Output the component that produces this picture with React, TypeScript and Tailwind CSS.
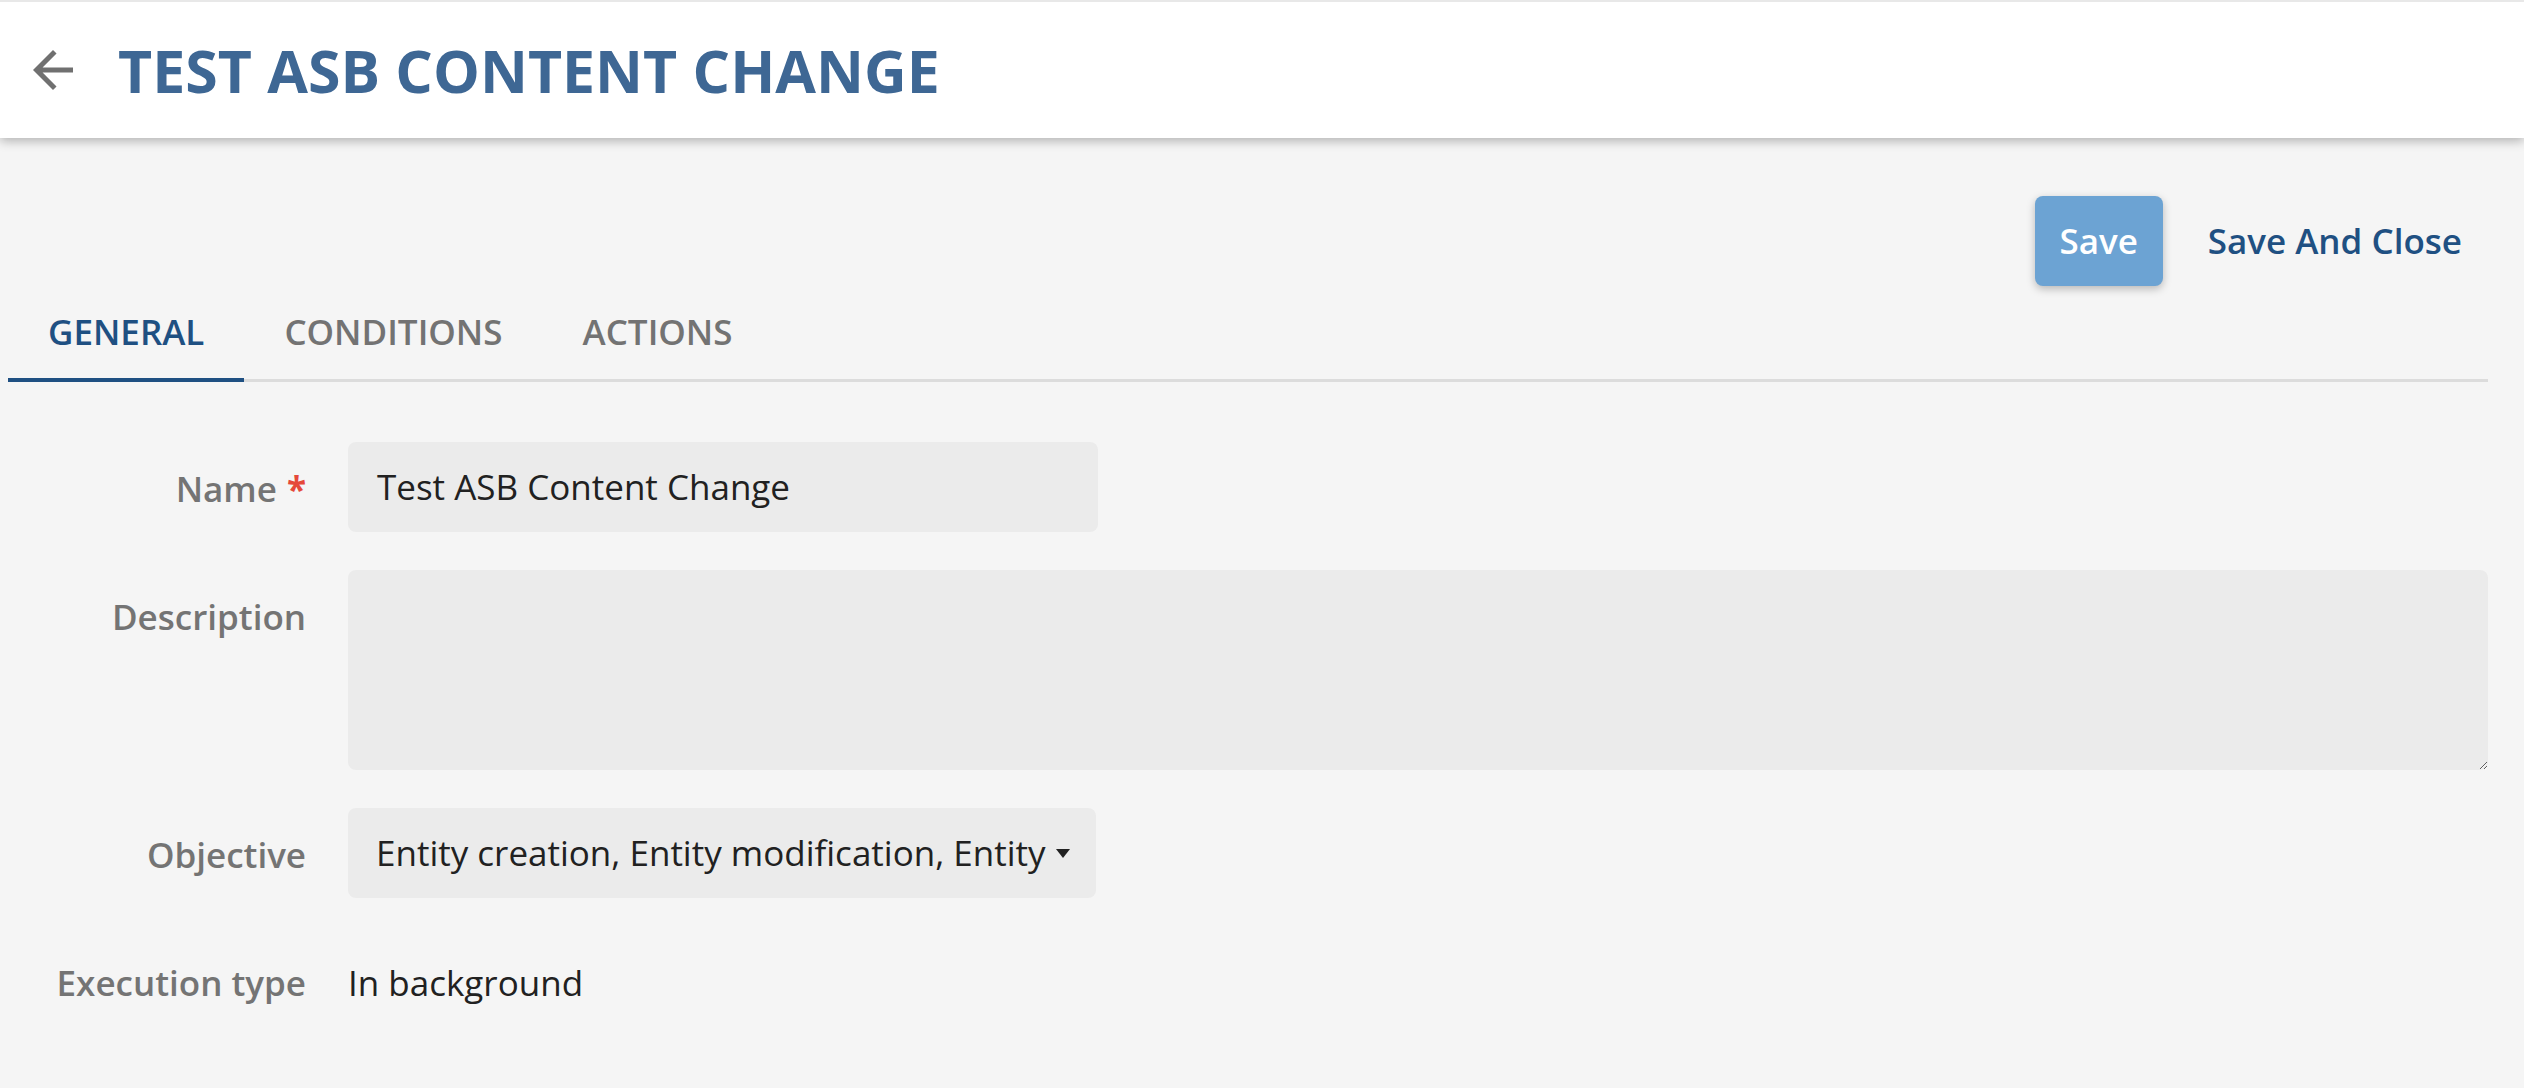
import React from "react";

type Tab = {
  label: string;
  active?: boolean;
};

const tabs: Tab[] = [{ label: "GENERAL", active: true }, { label: "CONDITIONS" }, { label: "ACTIONS" }];

function FieldLabel({ children }: { children: React.ReactNode }) {
  return (
    <div className="flex h-[90px] w-[298px] shrink-0 items-center justify-end pt-[4px] text-[35px] font-semibold text-[#747474]">
      {children}
    </div>
  );
}

export default function App() {
  return (
    <div className="min-h-[1088px] bg-[#f5f5f5] font-['Open_Sans',sans-serif]">
      {/* header */}
      <header className="relative z-10 flex h-[138px] items-center border-t-2 border-[#e8e8e8] bg-white shadow-[0_3px_10px_rgba(0,0,0,0.28)]">
        <button className="ml-[23px] flex h-[60px] w-[60px] items-center justify-center text-[#707070]">
          <svg viewBox="0 0 24 24" width="60" height="60" fill="currentColor">
            <path d="M20 11H7.83l5.59-5.59L12 4l-8 8 8 8 1.41-1.41L7.83 13H20v-2z" />
          </svg>
        </button>
        <h1 className="ml-[35px] text-[59px] font-bold leading-none text-[#3e6794]">TEST ASB CONTENT CHANGE</h1>
      </header>

      <main className="pl-[8px] pr-[36px]">
        {/* actions */}
        <div className="flex items-center justify-end pt-[58px]">
          <button className="h-[90px] w-[128px] rounded-[8px] bg-[#6ca3d3] text-[35px] font-semibold text-white shadow-[0_3px_8px_rgba(0,0,0,0.25)]">
            Save
          </button>
          <button className="ml-[19px] h-[90px] px-[26px] text-[35px] font-semibold text-[#1f5082]">Save And Close</button>
        </div>

        {/* tabs */}
        <div className="flex border-b-[3px] border-[#dcdcdc]">
          {tabs.map((tab) => (
            <div
              key={tab.label}
              className={
                tab.active
                  ? "-mb-[3px] flex h-[96px] items-center border-b-4 border-[#1f5082] px-[40px] text-[35px] font-semibold text-[#1f5082]"
                  : "flex h-[93px] items-center px-[40px] text-[35px] font-semibold text-[#737373]"
              }
            >
              {tab.label}
            </div>
          ))}
        </div>

        {/* form */}
        <div className="mt-[60px] flex flex-col gap-[38px]">
          <div className="flex gap-[42px]">
            <FieldLabel>
              Name<span className="ml-[10px] font-bold text-[#e5483a]">*</span>
            </FieldLabel>
            <div className="flex h-[90px] w-[750px] items-center rounded-[8px] bg-[#ebebeb] px-[29px] text-[35px] text-[#212121]">
              Test ASB Content Change
            </div>
          </div>

          <div className="flex gap-[42px]">
            <FieldLabel>Description</FieldLabel>
            <textarea className="h-[200px] flex-1 resize-y rounded-[8px] bg-[#ebebeb] px-[29px] py-[20px] text-[35px] text-[#212121] outline-none" />
          </div>

          <div className="flex gap-[42px]">
            <FieldLabel>Objective</FieldLabel>
            <div className="flex h-[90px] w-[748px] items-center gap-[10px] overflow-hidden whitespace-nowrap rounded-[8px] bg-[#ebebeb] pl-[28px] text-[35px] text-[#212121]">
              <span>Entity creation, Entity modification, Entity</span>
              <svg width="14" height="9" viewBox="0 0 14 9" className="shrink-0">
                <path d="M0 0h14L7 9z" fill="#212121" />
              </svg>
            </div>
          </div>

          <div className="flex gap-[42px]">
            <FieldLabel>Execution type</FieldLabel>
            <div className="flex h-[90px] items-center pt-[4px] text-[35px] text-[#212121]">In background</div>
          </div>
        </div>
      </main>
    </div>
  );
}
